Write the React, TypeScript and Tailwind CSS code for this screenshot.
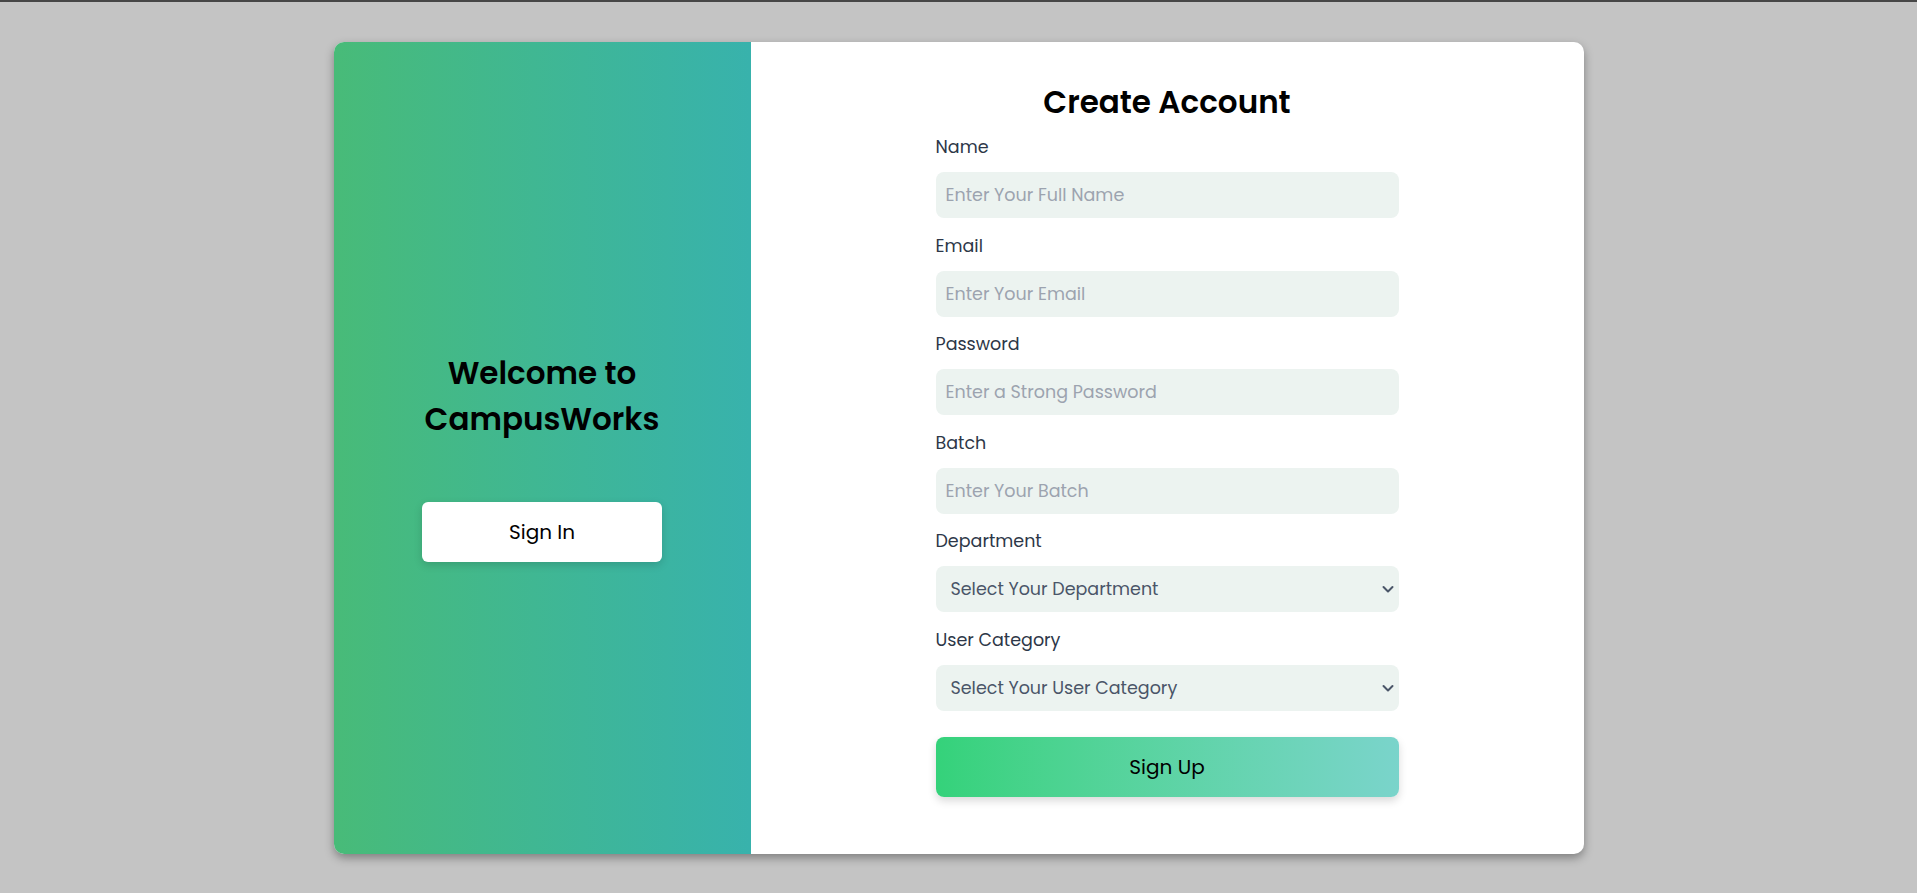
import React from 'react';

const font = { fontFamily: '"Poppins", "Inter", "Liberation Sans", sans-serif' };

const Field = ({ label, children }: { label: string; children: React.ReactNode }) => (
  <div className="mb-[15.6px] w-full">
    <label className="mb-[13px] block text-[17.5px] leading-[24px] font-normal text-[#2d3748]">{label}</label>
    {children}
  </div>
);

const TextInput = ({ placeholder, type = 'text' }: { placeholder: string; type?: string }) => (
  <input
    type={type}
    placeholder={placeholder}
    className="h-[46px] w-full rounded-lg bg-[#ecf3f0] px-[10px] text-[17.5px] text-[#2d3748] outline-none placeholder:text-[#9ca3af]"
  />
);

const Select = ({ placeholder }: { placeholder: string }) => (
  <div className="relative h-[46px] w-full">
    <select
      defaultValue=""
      className="h-full w-full appearance-none rounded-lg bg-[#ecf3f0] pl-[15px] pr-8 text-[17.5px] text-[#4a5568] outline-none"
    >
      <option value="" disabled>
        {placeholder}
      </option>
    </select>
    <svg
      className="pointer-events-none absolute right-[4px] top-1/2 h-[14px] w-[14px] -translate-y-1/2 text-[#4a5568]"
      viewBox="0 0 14 14"
      fill="none"
      stroke="currentColor"
      strokeWidth="2"
      strokeLinecap="round"
      strokeLinejoin="round"
    >
      <path d="M2.5 5 7 9.5 11.5 5" />
    </svg>
  </div>
);

export default function App() {
  return (
    <div style={font} className="min-h-[893px] w-full border-t-2 border-[#474747] bg-[#c4c4c4] pt-[40px]">
      <div className="mx-auto flex h-[812px] w-[1250px] overflow-hidden rounded-[10px] bg-white shadow-[0_4px_10px_rgba(0,0,0,0.35)]">
        {/* left panel */}
        <div className="flex w-[417px] shrink-0 flex-col items-center justify-center bg-gradient-to-r from-[#48bb78] to-[#38b2ac] pt-[16px]">
          <h2 className="text-center text-[31px] leading-[46px] font-semibold text-black">
            Welcome to
            <br />
            CampusWorks
          </h2>
          <button className="mt-[60px] h-[60px] w-[240px] rounded-md bg-white text-[20px] text-black shadow-[0_3px_8px_rgba(0,0,0,0.15)]">
            Sign In
          </button>
        </div>

        {/* right panel */}
        <div className="flex flex-1 flex-col items-center pt-[40px]">
          <h1 className="mb-[13px] text-[31px] leading-[40px] font-semibold text-black">Create Account</h1>
          <form className="w-[463px]" onSubmit={(e) => e.preventDefault()}>
            <Field label="Name">
              <TextInput placeholder="Enter Your Full Name" />
            </Field>
            <Field label="Email">
              <TextInput placeholder="Enter Your Email" type="email" />
            </Field>
            <Field label="Password">
              <TextInput placeholder="Enter a Strong Password" type="password" />
            </Field>
            <Field label="Batch">
              <TextInput placeholder="Enter Your Batch" />
            </Field>
            <Field label="Department">
              <Select placeholder="Select Your Department" />
            </Field>
            <Field label="User Category">
              <Select placeholder="Select Your User Category" />
            </Field>
            <button
              type="submit"
              className="mt-[10px] h-[60px] w-full rounded-lg bg-gradient-to-r from-[#34d27a] to-[#7ad4cb] text-[20px] text-black shadow-[0_4px_8px_rgba(0,0,0,0.15)]"
            >
              Sign Up
            </button>
          </form>
        </div>
      </div>
    </div>
  );
}
